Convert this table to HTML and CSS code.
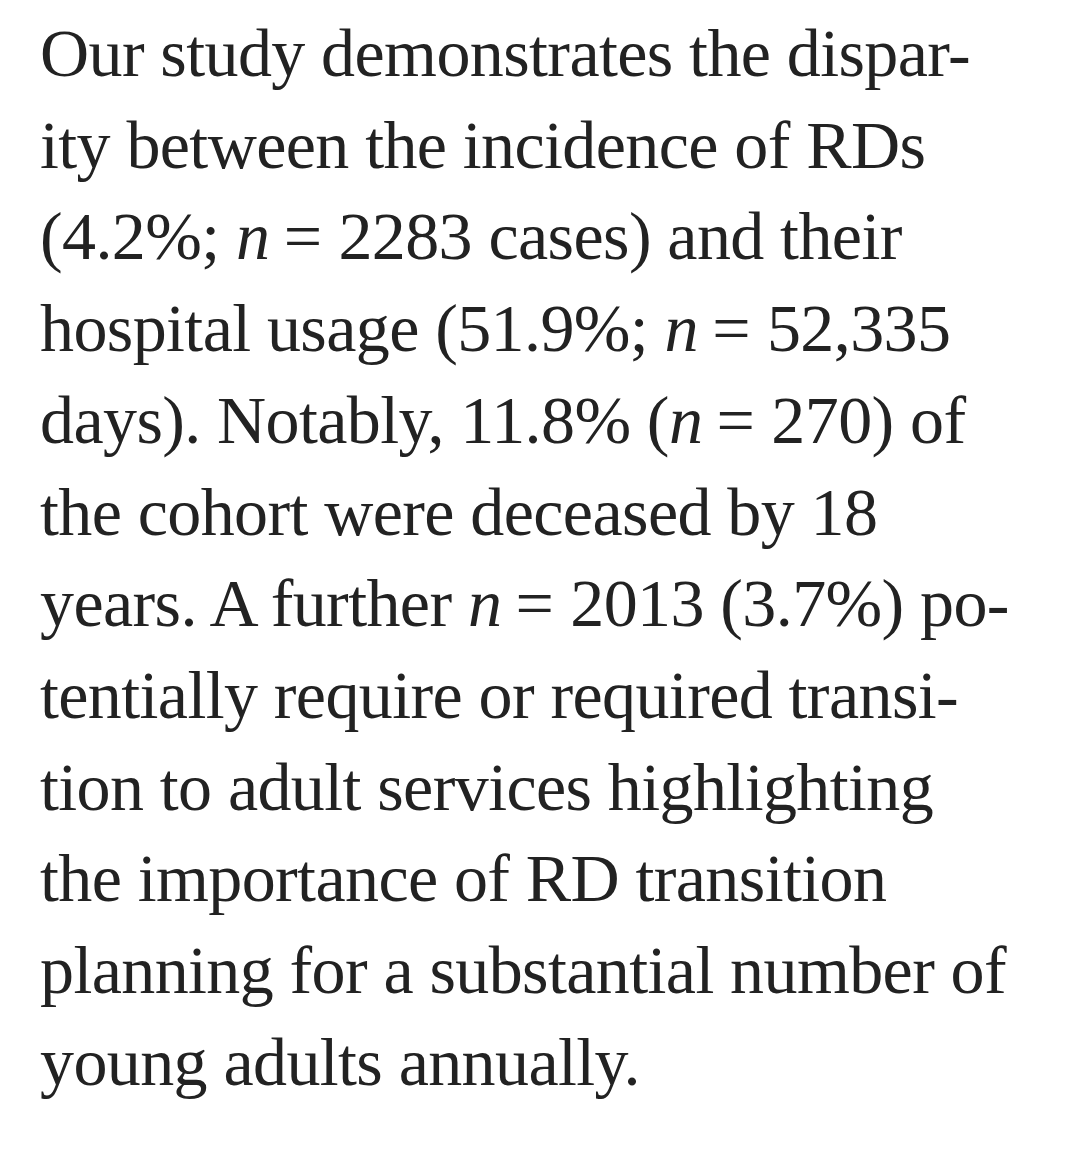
FILE: index.html
```html
<!DOCTYPE html>
<html lang="en">
<head>
<meta charset="utf-8">
<link rel="stylesheet" href="styles.css">
</head>
<body>
<div class="text">
<span class="line">Our study demonstrates the dispar-</span>
<span class="line">ity between the incidence of RDs</span>
<span class="line">(4.2%; <i>n</i><span class="eq">=</span>2283 cases) and their</span>
<span class="line">hospital usage (51.9%; <i>n</i><span class="eq">=</span>52,335</span>
<span class="line">days). Notably, 11.8% (<i>n</i><span class="eq">=</span>270) of</span>
<span class="line">the cohort were deceased by 18</span>
<span class="line">years. A further <i>n</i><span class="eq">=</span>2013 (3.7%) po-</span>
<span class="line">tentially require or required transi-</span>
<span class="line">tion to adult services highlighting</span>
<span class="line">the importance of RD transition</span>
<span class="line">planning for a substantial number of</span>
<span class="line">young adults annually.</span>
</div>
</body>
</html>
```
FILE: styles.css
```css
html, body {
  margin: 0;
  padding: 0;
  background: #ffffff;
}
.text {
  padding: 8px 0 0 40px;
  font-family: "Liberation Serif", "Times New Roman", serif;
  font-size: 68px;
  line-height: 91.7px;
  letter-spacing: -0.6px;
  color: #222222;
}
.line {
  display: block;
  white-space: nowrap;
}
.eq {
  margin: 0 0.25em 0 0.21em;
}
```
